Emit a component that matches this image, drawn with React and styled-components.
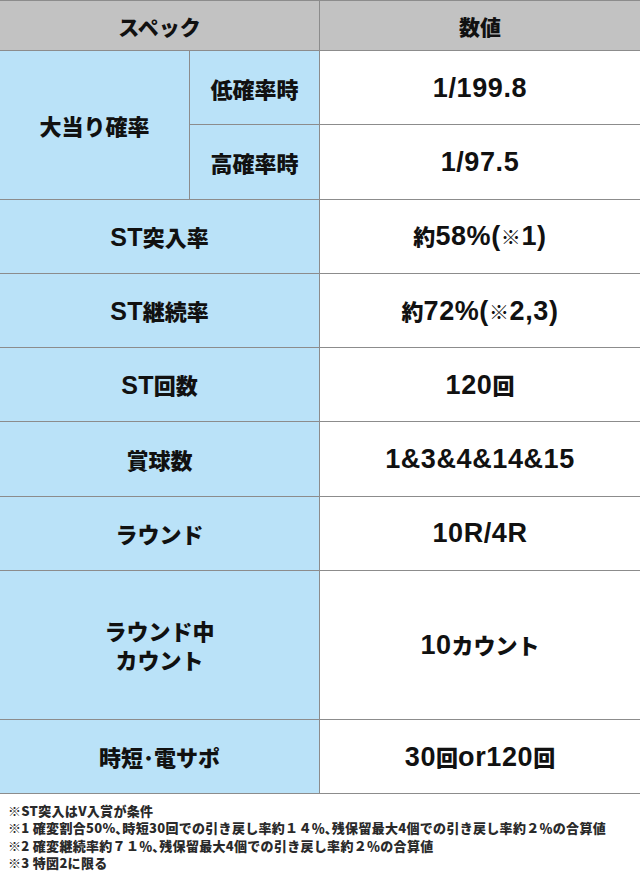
import React from "react";
import styled, { createGlobalStyle } from "styled-components";

const GlobalStyle = createGlobalStyle`
  body {
    margin: 0;
    background: #fff;
  }
`;

const LINE = "#8c8c8c";

const Page = styled.div`
  width: 640px;
  font-family: "Liberation Sans", "Noto Sans CJK JP", sans-serif;
  color: #111;
`;

const Table = styled.div`
  display: grid;
  grid-template-columns: 190px 130px 320px;
  grid-template-rows: 50px repeat(7, 74.3px) 148.6px 74.3px;
  border-top: 1px solid ${LINE};
`;

const bgs = {
  head: "#c2c2c2",
  label: "#bae2f8",
  value: "#ffffff",
};

const Cell = styled.div`
  box-sizing: border-box;
  display: flex;
  align-items: center;
  justify-content: center;
  text-align: center;
  grid-column: ${(p) => p.$col || "auto"};
  grid-row: ${(p) => p.$row || "auto"};
  background: ${(p) => bgs[p.$kind]};
  border-bottom: 1px solid ${LINE};
  border-right: ${(p) => (p.$edge ? "none" : `1px solid ${LINE}`)};
  font-weight: 700;
  font-size: ${(p) => (p.$kind === "value" ? "27px" : "25px")};
  letter-spacing: ${(p) => (p.$kind === "value" ? "0.6px" : "0.3px")};
  line-height: 28px;
`;

const Jp = styled.span`
  font-family: "Noto Sans CJK JP", sans-serif;
  font-size: ${(p) => p.$size || 22}px;
  font-weight: 900;
  letter-spacing: 0;
`;

const Note = styled.span`
  font-family: "Noto Sans CJK JP", sans-serif;
  font-size: 20px;
  font-weight: 400;
`;

const Notes = styled.div`
  padding: 8px 0 0 8px;
  font-family: "Noto Sans CJK JP", sans-serif;
  font-weight: 900;
  font-size: 13px;
  letter-spacing: 0.3px;
  line-height: 17.5px;
  color: #2a2a2a;
`;

const NoteLine = styled.div`
  white-space: nowrap;
`;

// split a string into CJK runs (smaller) and latin runs (bigger)
const Mixed = ({ text, size }) =>
  text.split(/([\u3000-\u30ff\u4e00-\u9fff\uff65]+|※)/).map((part, i) => {
    if (!part) return null;
    if (part === "※") return <Note key={i}>※</Note>;
    if (/[\u3000-\u30ff\u4e00-\u9fff\uff65]/.test(part))
      return (
        <Jp key={i} $size={size}>
          {part}
        </Jp>
      );
    return <React.Fragment key={i}>{part}</React.Fragment>;
  });

const rows = [
  { label: "ST突入率", value: "約58%(※1)" },
  { label: "ST継続率", value: "約72%(※2,3)" },
  { label: "ST回数", value: "120回" },
  { label: "賞球数", value: "1&3&4&14&15" },
  { label: "ラウンド", value: "10R/4R" },
  { label: ["ラウンド中", "カウント"], value: "10カウント", tall: true },
  { label: "時短･電サポ", value: "30回or120回" },
];

const notes = [
  "※ST突入はV入賞が条件",
  "※1 確変割合50%､時短30回での引き戻し率約１４％､残保留最大4個での引き戻し率約２％の合算値",
  "※2 確変継続率約７１％､残保留最大4個での引き戻し率約２％の合算値",
  "※3 特図2に限る",
];

export default function App() {
  return (
    <Page>
      <GlobalStyle />
      <Table>
        <Cell $kind="head" $col="1 / 3">
          <Jp $size={21}>スペック</Jp>
        </Cell>
        <Cell $kind="head" $edge>
          <Jp $size={21}>数値</Jp>
        </Cell>

        <Cell $kind="label" $row="span 2">
          <Jp>大当り確率</Jp>
        </Cell>
        <Cell $kind="label">
          <Jp>低確率時</Jp>
        </Cell>
        <Cell $kind="value" $edge>
          1/199.8
        </Cell>
        <Cell $kind="label">
          <Jp>高確率時</Jp>
        </Cell>
        <Cell $kind="value" $edge>
          1/97.5
        </Cell>

        {rows.map((r, i) => (
          <React.Fragment key={i}>
            <Cell $kind="label" $col="1 / 3">
              <div>
                {Array.isArray(r.label) ? (
                  r.label.map((l, j) => (
                    <div key={j}>
                      <Mixed text={l} />
                    </div>
                  ))
                ) : (
                  <Mixed text={r.label} />
                )}
              </div>
            </Cell>
            <Cell $kind="value" $edge>
              <div>
                <Mixed text={r.value} />
              </div>
            </Cell>
          </React.Fragment>
        ))}
      </Table>
      <Notes>
        {notes.map((n, i) => (
          <NoteLine key={i}>{n}</NoteLine>
        ))}
      </Notes>
    </Page>
  );
}
